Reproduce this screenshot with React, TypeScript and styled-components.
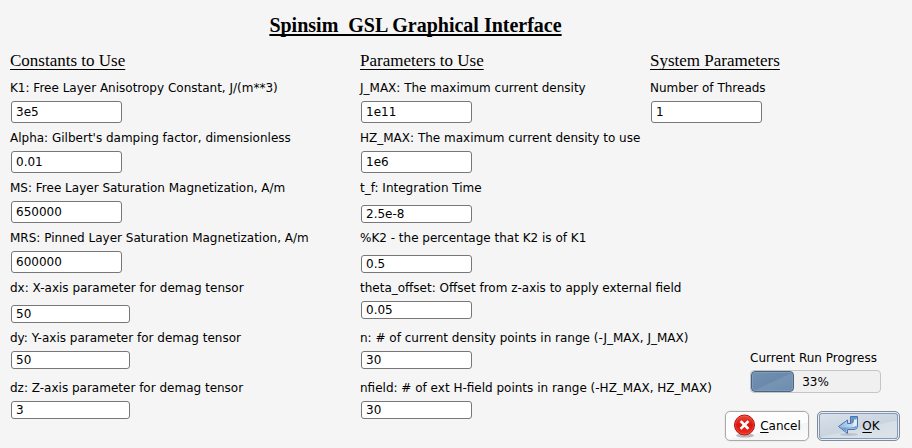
import React, { useId, useState } from "react";
import styled, { createGlobalStyle } from "styled-components";

const GlobalStyle = createGlobalStyle`
  *, *::before, *::after { box-sizing: border-box; }
  body {
    margin: 0;
    background: #f5f5f5;
    color: #000;
    font: 12px/16px "DejaVu Sans", sans-serif;
  }
`;

const Dialog = styled.form`
  display: flex;
  flex-direction: column;
  min-height: 100vh;
  padding: 13px 12px 7px 10px;
`;

const Title = styled.h1`
  margin: 0 79px 14px 0;
  font: bold 20px/24px "Liberation Serif", serif;
  text-align: center;
  white-space: pre;
  text-decoration: underline 2px;
  text-decoration-skip-ink: none;
  text-underline-offset: 2px;
`;

const Columns = styled.div`
  flex: 1;
  display: grid;
  grid-template-columns: minmax(0, 350fr) minmax(0, 290fr) minmax(0, 250fr);
`;

const Column = styled.div`
  display: flex;
  flex-direction: column;
`;

const Group = styled.section`
  display: flex;
  flex-direction: column;
`;

const Heading = styled.h2`
  margin: 0 0 9px;
  font: 17px/20px "Liberation Serif", serif;
  white-space: nowrap;
  text-decoration: underline 1px;
  text-decoration-skip-ink: none;
  text-underline-offset: 3px;
`;

const Field = styled.div`
  display: flex;
  flex-direction: column;
  gap: 5px;
  height: 50px;
`;

const Label = styled.label`
  white-space: nowrap;
`;

type Size = "regular" | "upper" | "lower";

const InputSlot = styled.div<{ $size: Size }>`
  display: flex;
  height: 22px;
  padding-left: 1px;
  align-items: ${(p) => (p.$size === "lower" ? "flex-end" : "flex-start")};
`;

const TextBox = styled.input<{ $size: Size; $wide?: boolean }>`
  width: ${(p) => (p.$wide ? 119 : 111)}px;
  height: ${(p) => (p.$size === "regular" ? 22 : 18)}px;
  padding: 0 4px;
  border: 1px solid #777;
  border-radius: 3px;
  background: #fff;
  color: #000;
  font: inherit;
  &:focus { outline: 1px solid #6d8fb5; }
`;

const Footer = styled.div`
  display: flex;
  flex-direction: column;
  align-items: flex-end;
  gap: 18px;
  margin-top: auto;
`;

const Progress = styled.div`
  width: 131px;
  margin-right: 19px;
  display: flex;
  flex-direction: column;
  gap: 4px;
  white-space: nowrap;
`;

const Track = styled.div`
  display: grid;
  align-items: center;
  height: 23px;
  border: 1px solid #c5c5c5;
  border-radius: 4px;
  background: #f0f0f0;
`;

const Fill = styled.div`
  grid-area: 1 / 1;
  height: 21px;
  border: 1px solid #4a6582;
  border-radius: 4px;
  background: linear-gradient(155deg, #7492b2 0%, #6a89ab 48%, #7694b3 54%, #6d8cad 100%);
  box-shadow: inset 0 0 0 1px #7f9bb9;
`;

const Percent = styled.span`
  grid-area: 1 / 1;
  text-align: center;
`;

const Buttons = styled.div`
  display: flex;
  gap: 8px;
`;

const Button = styled.button<{ $primary?: boolean }>`
  display: flex;
  align-items: center;
  justify-content: center;
  gap: 3px;
  width: ${(p) => (p.$primary ? 83 : 84)}px;
  height: 30px;
  padding: 0;
  border: 1px solid ${(p) => (p.$primary ? "#858a91" : "#a9a9a9")};
  border-radius: 5px;
  background: ${(p) =>
    p.$primary
      ? "linear-gradient(168deg, #dbe2ea 0%, #c9d4df 55%, #d5dee7 57%, #dde4eb 100%)"
      : "linear-gradient(168deg, #ffffff 0%, #fcfcfc 60%, #f4f4f4 62%, #fafafa 100%)"};
  box-shadow: ${(p) =>
    p.$primary ? "inset 0 0 0 1px #e9eef3, inset 0 0 0 2px #7d9cbf" : "0 0 0 1px #ececec"};
  color: #000;
  font: inherit;
`;

const Mnemonic = styled.span`
  text-decoration: underline 1px;
  text-underline-offset: 2px;
`;

const CancelIcon = () => (
  <svg width="24" height="24" viewBox="0 0 24 24" aria-hidden="true">
    <defs>
      <linearGradient id="cancel-red" x1="0" y1="0" x2="0" y2="1">
        <stop offset="0" stopColor="#f0483c" />
        <stop offset=".5" stopColor="#d9140e" />
        <stop offset="1" stopColor="#ee3020" />
      </linearGradient>
    </defs>
    <ellipse cx="12" cy="21.5" rx="9" ry="2" fill="#000" opacity=".25" />
    <circle cx="11.5" cy="11" r="10" fill="url(#cancel-red)" stroke="#b40f09" />
    <circle cx="11.5" cy="11" r="9" fill="none" stroke="#f47b70" opacity=".4" />
    <path d="M8.5 8l6 6M14.5 8l-6 6" stroke="#fff" strokeWidth="2.6" strokeLinecap="square" />
  </svg>
);

const OkIcon = () => (
  <svg width="22" height="22" viewBox="0 0 22 22" aria-hidden="true">
    <defs>
      <linearGradient id="ok-blue" x1="0" y1="0" x2="1" y2="0">
        <stop offset="0" stopColor="#8fb6df" />
        <stop offset=".5" stopColor="#b4d0ea" />
        <stop offset="1" stopColor="#d3e5f5" />
      </linearGradient>
    </defs>
    <ellipse cx="12" cy="19.5" rx="9" ry="1.5" fill="#000" opacity=".12" />
    <path
      d="M13.5 1.5H20.5V11Q20.5 14.5 17 14.5H10.5V18.5L1.5 11.5L10.5 5V8.5H13.5Z"
      fill="url(#ok-blue)"
      stroke="#4674ae"
      strokeLinejoin="round"
    />
    <path d="M14 2H20V3L17 7.5H14Z" fill="#6d96c6" />
    <path d="M16.5 4.5H19.5V10Q19.5 11.5 17.5 11.5H16.5Z" fill="#e3eff9" />
    <path d="M13.5 8.5Q16.5 8.5 16.5 4.5" fill="none" stroke="#4674ae" />
    <path d="M3.5 12.5H14.5Q17.5 12.5 19.5 10.5V11Q19.5 13.5 17 13.5H9.5V16.5Z" fill="#6f9bd0" />
  </svg>
);

interface FieldData {
  label: string;
  value: string;
  size?: Size;
  wide?: boolean;
}

const constants: FieldData[] = [
  { label: "K1: Free Layer Anisotropy Constant, J/(m**3)", value: "3e5" },
  { label: "Alpha: Gilbert's damping factor, dimensionless", value: "0.01" },
  { label: "MS: Free Layer Saturation Magnetization, A/m", value: "650000" },
  { label: "MRS: Pinned Layer Saturation Magnetization, A/m", value: "600000" },
  { label: "dx: X-axis parameter for demag tensor", value: "50", size: "lower", wide: true },
  { label: "dy: Y-axis parameter for demag tensor", value: "50", size: "upper", wide: true },
  { label: "dz: Z-axis parameter for demag tensor", value: "3", size: "upper", wide: true },
];

const parameters: FieldData[] = [
  { label: "J_MAX: The maximum current density", value: "1e11" },
  { label: "HZ_MAX: The maximum current density to use", value: "1e6" },
  { label: "t_f: Integration Time", value: "2.5e-8", size: "lower" },
  { label: "%K2 - the percentage that K2 is of K1", value: "0.5", size: "lower" },
  { label: "theta_offset: Offset from z-axis to apply external field", value: "0.05", size: "upper" },
  { label: "n: # of current density points in range (-J_MAX, J_MAX)", value: "30", size: "upper" },
  { label: "nfield: # of ext H-field points in range (-HZ_MAX, HZ_MAX)", value: "30", size: "upper" },
];

const system: FieldData[] = [{ label: "Number of Threads", value: "1" }];

function TextField({ label, value, size = "regular", wide }: FieldData) {
  const id = useId();
  const [text, setText] = useState(value);
  return (
    <Field>
      <Label htmlFor={id}>{label}</Label>
      <InputSlot $size={size}>
        <TextBox id={id} $size={size} $wide={wide} value={text} onChange={(e) => setText(e.target.value)} />
      </InputSlot>
    </Field>
  );
}

function FieldGroup({ title, fields }: { title: string; fields: FieldData[] }) {
  return (
    <Group>
      <Heading>{title}</Heading>
      {fields.map((f) => (
        <TextField key={f.label} {...f} />
      ))}
    </Group>
  );
}

function RunProgress({ percent }: { percent: number }) {
  return (
    <Progress>
      <span id="run-progress">Current Run Progress</span>
      <Track role="progressbar" aria-labelledby="run-progress" aria-valuenow={percent} aria-valuemin={0} aria-valuemax={100}>
        <Fill style={{ width: `${percent}%` }} />
        <Percent>{percent}%</Percent>
      </Track>
    </Progress>
  );
}

export default function App() {
  return (
    <>
      <GlobalStyle />
      <Dialog onSubmit={(e) => e.preventDefault()}>
        <Title>{"Spinsim  GSL Graphical Interface"}</Title>
        <Columns>
          <Column>
            <FieldGroup title="Constants to Use" fields={constants} />
          </Column>
          <Column>
            <FieldGroup title="Parameters to Use" fields={parameters} />
          </Column>
          <Column>
            <FieldGroup title="System Parameters" fields={system} />
            <Footer>
              <RunProgress percent={33} />
              <Buttons>
                <Button type="button">
                  <CancelIcon />
                  <span><Mnemonic>C</Mnemonic>ancel</span>
                </Button>
                <Button type="submit" $primary>
                  <OkIcon />
                  <span><Mnemonic>O</Mnemonic>K</span>
                </Button>
              </Buttons>
            </Footer>
          </Column>
        </Columns>
      </Dialog>
    </>
  );
}
